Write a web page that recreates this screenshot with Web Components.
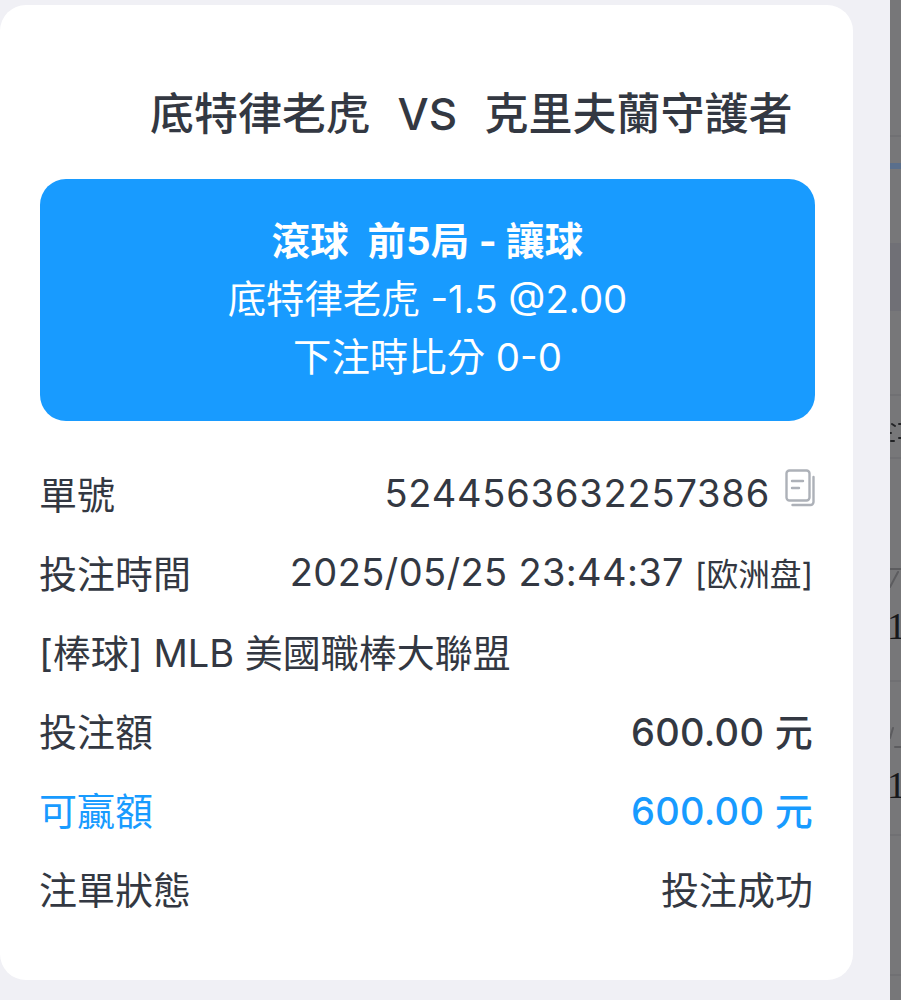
<!DOCTYPE html>
<html>
<head>
<meta charset="utf-8">
<title>注單詳情</title>
<style>
  html, body { margin: 0; height: 100%; overflow: hidden; background: #f0f0f5; }
  body { font-family: Inter, "Noto Sans CJK TC", sans-serif; }
</style>
</head>
<body>
<bet-page>
  <bet-card>
    <span slot="title">底特律老虎&nbsp; VS&nbsp; 克里夫蘭守護者</span>
    <bet-banner slot="banner">
      <b>滾球&nbsp; 前5局 - 讓球</b>
      <span>底特律老虎 -1.5 @2.00</span>
      <span>下注時比分 0-0</span>
    </bet-banner>
    <bet-row label="單號"><span style="letter-spacing:.8px">5244563632257386</span><copy-icon></copy-icon></bet-row>
    <bet-row label="投注時間"><span style="letter-spacing:.35px">2025/05/25 23:44:37 <small style="letter-spacing:0">[欧洲盘]</small></span></bet-row>
    <bet-row label="[棒球] MLB 美國職棒大聯盟"></bet-row>
    <bet-row label="投注額" strong><span style="letter-spacing:.3px">600.00 元</span></bet-row>
    <bet-row label="可贏額" accent><span style="letter-spacing:.3px">600.00 元</span></bet-row>
    <bet-row label="注單狀態">投注成功</bet-row>
  </bet-card>
  <back-strip></back-strip>
</bet-page>

<script>
const pageTemplate = document.createElement('template');
pageTemplate.innerHTML = `
  <style>
    :host {
      display: grid;
      grid-template-columns: 853px 1fr 11px;
      height: 1000px;
      padding-top: 5px;
      box-sizing: border-box;
    }
  </style>
  <slot></slot>
`;

const cardTemplate = document.createElement('template');
cardTemplate.innerHTML = `
  <style>
    :host {
      display: block;
      grid-column: 1;
      height: 975px;
      box-sizing: border-box;
      padding: 0 38px 0 40px;
      background: #fff;
      border-radius: 26px;
      color: #333842;
    }
    h1 {
      margin: 0;
      padding: 81px 0 0 110px;
      height: 174px;
      box-sizing: border-box;
      font-size: 44px;
      line-height: 56px;
      font-weight: 500;
      word-spacing: 2px;
      white-space: nowrap;
    }
    .rows { display: flex; flex-direction: column; margin-top: 32px; padding-right: 2px; }
  </style>
  <h1><slot name="title"></slot></h1>
  <slot name="banner"></slot>
  <div class="rows"><slot></slot></div>
`;

const bannerTemplate = document.createElement('template');
bannerTemplate.innerHTML = `
  <style>
    :host {
      display: flex;
      flex-direction: column;
      align-items: center;
      justify-content: center;
      height: 242px;
      box-sizing: border-box;
      padding-bottom: 3px;
      background: #189bff;
      border-radius: 26px;
      color: #fff;
      font-size: 38.4px;
      line-height: 58px;
      white-space: nowrap;
    }
    ::slotted(b) { font-weight: 700; letter-spacing: .2px; }
  </style>
  <slot></slot>
`;

const rowTemplate = document.createElement('template');
rowTemplate.innerHTML = `
  <style>
    :host {
      display: flex;
      justify-content: space-between;
      align-items: center;
      height: 79px;
      font-size: 38px;
      white-space: nowrap;
    }
    :host([strong]) .value,
    :host([accent]) .value { font-weight: 500; }
    :host([accent]) { color: #189bff; }
    .label { margin-left: -1px; }
    .value { display: flex; align-items: center; gap: 15px; }
  </style>
  <span class="label"></span>
  <span class="value"><slot></slot></span>
`;

const copyTemplate = document.createElement('template');
copyTemplate.innerHTML = `
  <style>
    :host { display: block; width: 30px; height: 38px; margin: -10px -2px 0 0; }
    svg { display: block; }
  </style>
  <svg width="30" height="38" viewBox="0 0 30 38" fill="none" stroke="#adb1b8" stroke-width="2.4" stroke-linecap="round">
    <rect x="1.5" y="1.5" width="23" height="30" rx="3"></rect>
    <path d="M7 12h11M7 19h7"></path>
    <path d="M28.5 8v25a3 3 0 0 1-3 3h-18"></path>
  </svg>
`;

const stripTemplate = document.createElement('template');
stripTemplate.innerHTML = `
  <style>
    :host {
      display: block;
      grid-column: 3;
      margin-top: -5px;
      height: 1000px;
      background: #777779;
      position: relative;
      overflow: hidden;
      font-family: "Liberation Serif", serif;
      font-size: 38px;
      color: #17181b;
    }
    .line { position: absolute; left: 0; right: 0; height: 2px; background: #707073; }
    .bar { position: absolute; left: 0; right: 0; top: 163px; height: 6px; background: #5a6f8c; }
    .tint { position: absolute; left: 0; right: 0; top: 243px; height: 68px; background: #707076; }
    .num { position: absolute; left: -3px; line-height: 38px; }
    svg { position: absolute; left: 0; top: 0; }
  </style>
  <div class="bar"></div>
  <div class="tint"></div>
  <div class="line" style="top:135px"></div>
  <div class="line" style="top:394px"></div>
  <div class="line" style="top:457px"></div>
  <div class="line" style="top:680px"></div>
  <div class="line" style="top:834px"></div>
  <div class="line" style="top:974px"></div>
  <svg width="11" height="1000" viewBox="0 0 11 1000" fill="none" stroke-linecap="round">
    <path d="M2 424l3 2M9 424h2M0 433h1M1 441h3M9 438h2" stroke="#222326" stroke-width="2"></path>
    <path d="M0 569h11M8 572l-8 15M3 728l-3 10M5 747h6" stroke="#5c5c5f" stroke-width="2"></path>
  </svg>
  <div class="num" style="top:607px">1</div>
  <div class="num" style="top:766px">1</div>
`;

class BetPage extends HTMLElement {
  constructor() {
    super();
    this.attachShadow({ mode: 'open' }).appendChild(pageTemplate.content.cloneNode(true));
  }
}

class BetCard extends HTMLElement {
  constructor() {
    super();
    this.attachShadow({ mode: 'open' }).appendChild(cardTemplate.content.cloneNode(true));
  }
}

class BetBanner extends HTMLElement {
  constructor() {
    super();
    this.attachShadow({ mode: 'open' }).appendChild(bannerTemplate.content.cloneNode(true));
  }
}

class BetRow extends HTMLElement {
  constructor() {
    super();
    this._shadowRoot = this.attachShadow({ mode: 'open' });
    this._shadowRoot.appendChild(rowTemplate.content.cloneNode(true));
    this.$label = this._shadowRoot.querySelector('.label');
  }

  connectedCallback() {
    this.$label.textContent = this.getAttribute('label');
  }
}

class CopyIcon extends HTMLElement {
  constructor() {
    super();
    this.attachShadow({ mode: 'open' }).appendChild(copyTemplate.content.cloneNode(true));
  }
}

class BackStrip extends HTMLElement {
  constructor() {
    super();
    this.attachShadow({ mode: 'open' }).appendChild(stripTemplate.content.cloneNode(true));
  }
}

customElements.define('bet-page', BetPage);
customElements.define('bet-card', BetCard);
customElements.define('bet-banner', BetBanner);
customElements.define('bet-row', BetRow);
customElements.define('copy-icon', CopyIcon);
customElements.define('back-strip', BackStrip);
</script>
</body>
</html>
